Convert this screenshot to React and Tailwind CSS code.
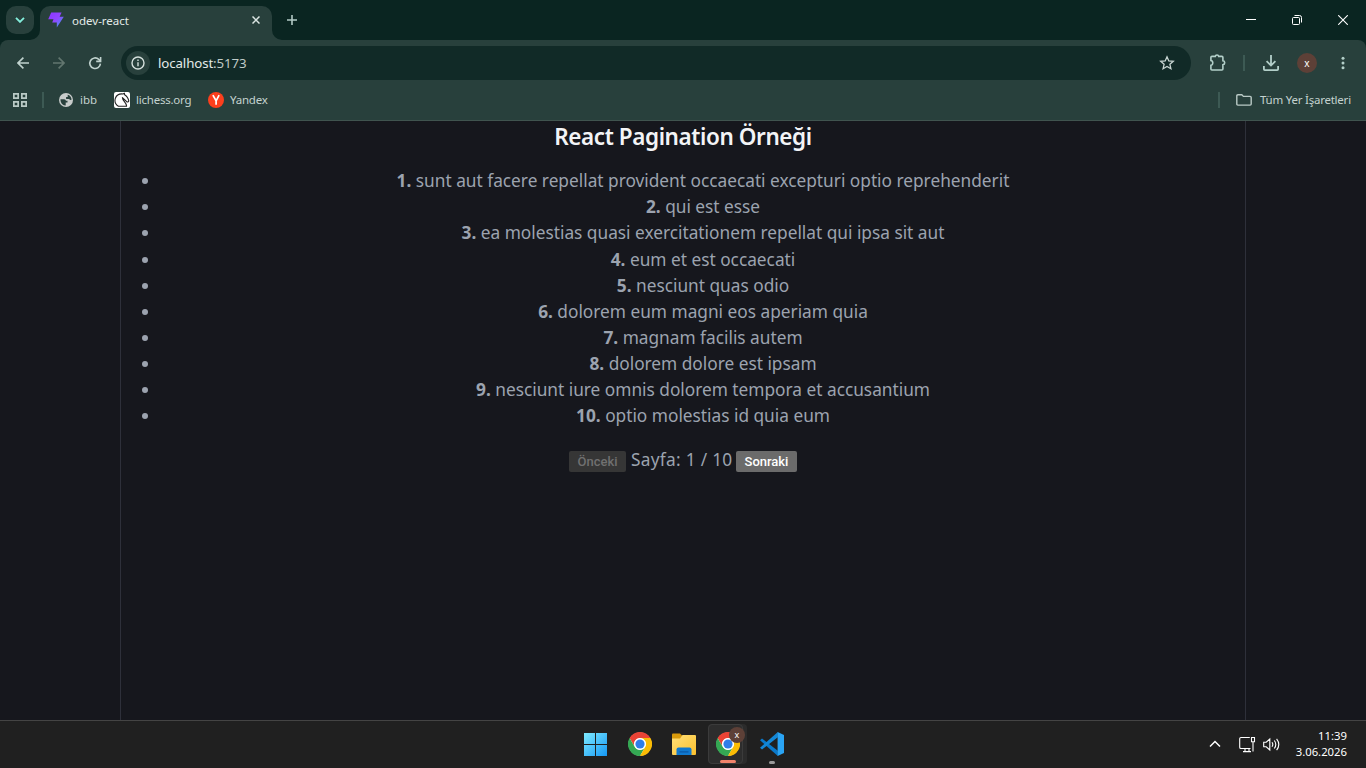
import { useState } from 'react';

const posts = [
  { id: 1, title: 'sunt aut facere repellat provident occaecati excepturi optio reprehenderit' },
  { id: 2, title: 'qui est esse' },
  { id: 3, title: 'ea molestias quasi exercitationem repellat qui ipsa sit aut' },
  { id: 4, title: 'eum et est occaecati' },
  { id: 5, title: 'nesciunt quas odio' },
  { id: 6, title: 'dolorem eum magni eos aperiam quia' },
  { id: 7, title: 'magnam facilis autem' },
  { id: 8, title: 'dolorem dolore est ipsam' },
  { id: 9, title: 'nesciunt iure omnis dolorem tempora et accusantium' },
  { id: 10, title: 'optio molestias id quia eum' }
];

const TOTAL_PAGES = 10;

function BoltLogo() {
  return (
    <svg width="16" height="16" viewBox="0 0 16 16">
      <defs>
        <linearGradient id="bolt" x1="0" y1="0" x2="1" y2="1">
          <stop offset="0" stopColor="#8b35ff" />
          <stop offset="0.5" stopColor="#9146ff" />
          <stop offset="0.75" stopColor="#5b7cf5" />
          <stop offset="1" stopColor="#8a3cff" />
        </linearGradient>
      </defs>
      <path fill="url(#bolt)" d="M3.2 0.4h10.4l-2 4.4h4.2L8.8 15.6V10.4H4.2l1.3-3.2H0.2z" />
    </svg>
  );
}

function ChromeLogo({ className }) {
  return (
    <svg className={className} viewBox="0 0 48 48">
      <circle cx="24" cy="24" r="23" fill="#fff" />
      <path fill="#ea4335" d="M3.2 12A24 24 0 0 1 44.8 12H24a12 12 0 0 0-10.4 18z" />
      <path fill="#34a853" d="M3.2 12A24 24 0 0 0 24 48l10.4-18a12 12 0 0 1-20.8 0z" />
      <path fill="#fbbc04" d="M44.8 12A24 24 0 0 1 24 48l10.4-18A12 12 0 0 0 24 12z" />
      <circle cx="24" cy="24" r="11.6" fill="#fff" />
      <circle cx="24" cy="24" r="9.2" fill="#2f7de9" />
    </svg>
  );
}

function TabStrip() {
  return (
    <div className="flex h-10 bg-[#0a2521]">
      <div className="ml-1.5 mt-1.5 flex size-7 items-center justify-center rounded-[10px] bg-[#28403c]">
        <svg width="10" height="6" viewBox="0 0 10 6" fill="none" stroke="#84efdc" strokeWidth="1.9">
          <path d="M1 0.8l4 4 4-4" />
        </svg>
      </div>
      <svg className="-ml-1 mt-auto" width="10" height="10" viewBox="0 0 10 10">
        <path fill="#28403c" d="M10 0v10H0A10 10 0 0 0 10 0z" />
      </svg>
      <div className="mt-1.5 flex h-[34px] w-[232px] items-center rounded-t-[10px] bg-[#28403c] pb-1.5 pl-2 pr-3">
        <BoltLogo />
        <span className="ml-2 flex-1 pt-px text-[11.5px] leading-4 text-[#e3ebe9]">odev-react</span>
        <svg width="8" height="8" viewBox="0 0 8 8" fill="none" stroke="#dce5e3" strokeWidth="1.5">
          <path d="M0.5 0.5l7 7M7.5 0.5l-7 7" />
        </svg>
      </div>
      <svg className="mt-auto" width="10" height="10" viewBox="0 0 10 10">
        <path fill="#28403c" d="M0 0v10h10A10 10 0 0 1 0 0z" />
      </svg>
      <svg className="ml-[5px] mt-[15px]" width="10" height="10" viewBox="0 0 10 10" fill="none" stroke="#b3cac6" strokeWidth="1.6">
        <path d="M5 0v10M0 5h10" />
      </svg>
      <div className="ml-auto mr-[18px] flex items-center gap-9 text-white">
        <svg width="10" height="10" viewBox="0 0 10 10" stroke="currentColor">
          <path d="M0 4.5h10" />
        </svg>
        <svg width="10" height="10" viewBox="0 0 10 10" fill="none" stroke="currentColor">
          <rect x="0.5" y="2.5" width="7" height="7" rx="1" />
          <path d="M2.5 0.5h5a2 2 0 0 1 2 2v5" />
        </svg>
        <svg width="10" height="10" viewBox="0 0 10 10" stroke="currentColor" strokeWidth="1.1">
          <path d="M0.2 0.2l9.6 9.6M9.8 0.2L0.2 9.8" />
        </svg>
      </div>
    </div>
  );
}

function Toolbar() {
  return (
    <div className="bg-[#0a2521]">
      <div className="flex h-10 items-center rounded-t-[8px] bg-[#28403c] pt-1.5">
        <svg className="ml-[17px]" width="12" height="12" viewBox="0 0 12 12" fill="none" stroke="#c0d2ce" strokeWidth="1.6">
          <path d="M12 6H1.2M6.4 0.6L1 6l5.4 5.4" />
        </svg>
        <svg className="ml-6" width="12" height="12" viewBox="0 0 12 12" fill="none" stroke="#62766f" strokeWidth="1.6">
          <path d="M0 6h10.8M5.6 0.6L11 6l-5.4 5.4" />
        </svg>
        <svg className="ml-[23px]" width="14" height="14" viewBox="0 0 14 14" fill="none" stroke="#c0d2ce" strokeWidth="1.6">
          <path d="M12.4 7.6A5.3 5.3 0 1 1 10.8 3.4L12.4 5" />
          <path d="M12.6 1v4.4H8.2" />
        </svg>
        <div className="ml-[19px] flex h-[34px] w-[1070px] items-center rounded-full bg-[#112a27] pl-[5px] pr-4">
          <div className="flex size-6 items-center justify-center rounded-full bg-[#28403c]">
            <svg width="14" height="14" viewBox="0 0 14 14" fill="none" stroke="#d5e0dd" strokeWidth="1.4">
              <circle cx="7" cy="7" r="6" />
              <path d="M7 6.2v4M7 3.6v1.5" />
            </svg>
          </div>
          <span className="ml-2 flex-1 text-[13.3px] leading-5 tracking-[-0.12px] text-[#e3ebe9]">
            localhost<span className="text-[#c0cbc8]">:5173</span>
          </span>
          <svg width="16" height="16" viewBox="0 0 16 16" fill="none" stroke="#c9d6d3" strokeWidth="1.3">
            <path d="M8 1.8l1.8 4.1 4.5.4-3.4 3 1 4.4L8 11.4l-3.9 2.3 1-4.4-3.4-3 4.5-.4z" />
          </svg>
        </div>
        <svg className="ml-[18px]" width="18" height="18" viewBox="0 0 18 18" fill="none" stroke="#b3cfc9" strokeWidth="1.6">
          <path d="M1.9 3.4q0-1 1-1h3.4q.2-1.4 1.7-1.4t1.7 1.4h3.2q1 0 1 1v3.4q1.8.2 1.8 2t-1.8 2v4.2q0 1-1 1H2.9q-1 0-1-1v-3.6q1.9-.4 1.9-2.5t-1.9-2.4z" />
        </svg>
        <div className="ml-4 h-4 w-0.5 bg-[#3d5a54]" />
        <svg className="ml-[17px]" width="18" height="18" viewBox="0 0 18 18" fill="none" stroke="#b3cfc9" strokeWidth="1.8">
          <path d="M9 1v10M4.6 7.2L9 11.6l4.4-4.4M1.9 12v3.2q0 .9.9.9h12.4q.9 0 .9-.9V12" />
        </svg>
        <div className="ml-[17px] flex size-5 items-center justify-center rounded-full bg-[#5d4037] pb-px text-[10px] leading-none text-white">
          x
        </div>
        <svg className="ml-6" width="4" height="14" viewBox="0 0 4 14" fill="#b3cfc9">
          <circle cx="2" cy="2.2" r="1.5" />
          <circle cx="2" cy="7" r="1.5" />
          <circle cx="2" cy="11.8" r="1.5" />
        </svg>
      </div>
    </div>
  );
}

function Bookmarks() {
  return (
    <div className="flex h-[41px] items-center border-b border-[#40544f] bg-[#28403c] pl-[13px] text-[11.5px] tracking-[-0.23px] text-[#c4d2cf]">
      <svg width="14" height="14" viewBox="0 0 14 14" fill="none" stroke="#b9c9c5" strokeWidth="1.7">
        <path d="M0.85.85h4.3v4.3h-4.3zM8.85.85h4.3v4.3h-4.3zM0.85 8.85h4.3v4.3h-4.3zM8.85 8.85h4.3v4.3h-4.3z" />
      </svg>
      <div className="ml-[15px] h-4 w-0.5 bg-[#3d5a54]" />
      <svg className="ml-[15px]" width="14" height="14" viewBox="0 0 14 14">
        <circle cx="7" cy="7" r="7" fill="#c7cbca" />
        <path fill="#28403c" d="M1.5 6.2h3.6q1.8.2 1.8 1.6h1.6v1.7H6.7v3q-3.6.1-4.8-3.4Q1.4 7.8 1.5 6.2z" />
        <path fill="#28403c" d="M8.7 1.8q3.2.9 3.8 4.2.1 1-.5 1.1-1.4.1-1.8-1H7.1V3.9h1.6z" />
      </svg>
      <span className="ml-[7px] w-[17px] tracking-normal">ibb</span>
      <svg className="ml-[17px]" width="16" height="16" viewBox="0 0 16 16">
        <rect width="16" height="16" rx="2" fill="#fff" />
        <path
          fill="none"
          stroke="#222"
          strokeWidth="1.1"
          strokeLinejoin="round"
          d="M12.6 14.2H4.4C1.4 12.4.4 9.2 1.4 6.2 2.6 3 5.6 1.6 9 2l1.4-.8.2 1.5c2.3 1.2 3.5 3.4 4.2 6.2-.5 1-1.3 1.3-2.1.8L8.4 5.6c.3 3.8 4.3 5 4.2 8.6z"
        />
      </svg>
      <span className="ml-1.5 w-[56px] whitespace-nowrap">lichess.org</span>
      <svg className="ml-4" width="16" height="16" viewBox="0 0 16 16">
        <circle cx="8" cy="8" r="8" fill="#fc3f1d" />
        <path fill="none" stroke="#fff" strokeWidth="1.7" d="M4.9 3.2l3.2 5.6v4M11.1 3.2L8.1 8.8" />
      </svg>
      <span className="ml-1.5">Yandex</span>
      <div className="ml-auto h-4 w-0.5 bg-[#3d5a54]" />
      <svg className="ml-4" width="16" height="12" viewBox="0 0 16 12" fill="none" stroke="#b9c9c5" strokeWidth="1.4">
        <path d="M.8 10V1.9Q.8.8 1.9.8h3.9l1.6 1.6h6.7q1.1 0 1.1 1.1V10q0 1.1-1.1 1.1H1.9Q.8 11.1.8 10z" />
      </svg>
      <span className="ml-2 mr-[15px] w-[91px] whitespace-nowrap">Tüm Yer İşaretleri</span>
    </div>
  );
}

function PageButton({ className, disabled, onClick, children }) {
  return (
    <button
      type="button"
      disabled={disabled}
      onClick={onClick}
      className={`mt-[3px] h-[21px] rounded-xs bg-[#6b6b6b] pb-px font-['Roboto'] text-[13px] font-medium leading-none text-white disabled:bg-[#363636] disabled:text-[#707070] ${className}`}
    >
      {children}
    </button>
  );
}

function Pagination({ page, onChange }) {
  return (
    <div className="mt-[18px] flex h-[26px] items-center justify-center gap-[5px]">
      <PageButton className="w-[57px]" disabled={page === 1} onClick={() => onChange(page - 1)}>
        Önceki
      </PageButton>
      <span className="w-[100px] whitespace-nowrap text-center tracking-[0.28px]">Sayfa: {page} / {TOTAL_PAGES}</span>
      <PageButton className="w-[61px]" disabled={page === TOTAL_PAGES} onClick={() => onChange(page + 1)}>
        Sonraki
      </PageButton>
    </div>
  );
}

function Page() {
  const [page, setPage] = useState(1);

  return (
    <main className="flex flex-1 justify-center bg-[#16171d]">
      <div className="w-[1126px] border-x border-[#2e303a] text-[17.3px] leading-[26.1px] tracking-[-0.01px] text-[#9ca3af]">
        <h2 className="mt-0.5 text-center text-[22.5px] font-semibold leading-[28px] tracking-[-0.42px] text-[#f3f4f6]">
          React Pagination Örneği
        </h2>
        <ul className="mt-[17.25px] pl-10">
          {posts.map(post => (
            <li key={post.id} className="flex items-center">
              <span className="-ml-[19px] size-1.5 rounded-full bg-[#9ca3af]" />
              <span className="ml-[13px] flex-1 text-center">
                <strong>{post.id}.</strong> {post.title}
              </span>
            </li>
          ))}
        </ul>
        <Pagination page={page} onChange={setPage} />
      </div>
    </main>
  );
}

function Taskbar() {
  return (
    <div className="flex h-12 items-center border-t border-[#444] bg-[#202020] pb-px text-white">
      <svg className="ml-[584px]" width="23" height="23" viewBox="0 0 23 23">
        <defs>
          <linearGradient id="win" x1="0" y1="0" x2="1" y2="1">
            <stop offset="0" stopColor="#7eeaff" />
            <stop offset="1" stopColor="#1598f5" />
          </linearGradient>
        </defs>
        <path fill="url(#win)" d="M0 0h11v11H0zM12 0h11v11H12zM0 12h11v11H0zM12 12h11v11H12z" />
      </svg>
      <ChromeLogo className="ml-[21px] size-6" />
      <svg className="ml-5" width="24" height="22" viewBox="0 0 24 22">
        <defs>
          <linearGradient id="folder" x1="0" y1="0" x2="1" y2="1">
            <stop offset="0" stopColor="#ffe07a" />
            <stop offset="1" stopColor="#fbc02d" />
          </linearGradient>
        </defs>
        <path fill="#d99a0b" d="M0 1.5Q0 .5 1 .5h7l2.5 2.5V8H0z" />
        <path fill="url(#folder)" d="M0 5.5h8l2.5-3.5H23q1 0 1 1v18q0 1-1 1H1q-1 0-1-1z" />
        <path fill="#1079cf" d="M4.5 22v-5.5q0-2 2-2h11q2 0 2 2V22z" />
        <path fill="#0a57a4" d="M7.5 18.3h9v1.2h-9z" />
      </svg>
      <div className="ml-3 flex h-10 w-[39px] rounded-[4px] bg-[#2b2b2b]">
        <div className="relative flex w-[35px] items-center justify-center rounded-[4px] border border-[#3b3b3b] bg-[#2d2d2d]">
          <ChromeLogo className="ml-[5px] size-6" />
          <span className="absolute left-5 top-0.5 flex size-4 items-center justify-center rounded-full bg-[#5d4037] pb-px text-[9px] leading-none text-white">
            x
          </span>
          <span className="absolute bottom-0 left-[11px] h-[3px] w-4 rounded-full bg-[#f2836b]" />
        </div>
      </div>
      <div className="relative ml-[13px] h-10 w-6">
        <svg className="mt-2" width="24" height="24" viewBox="0 0 24 24">
          <path fill="#0a79cb" d="M0 8.2l2-1.8 15.8 12.4v5.2z" />
          <path fill="#1387d6" d="M0 15.8l2 1.8L17.8 5.2V0z" />
          <path fill="#2aa4f4" d="M17.6 0L24 3v18l-6.4 3z" />
        </svg>
        <span className="absolute bottom-0 left-[9px] h-[3px] w-1.5 rounded-full bg-[#9a9a9a]" />
      </div>
      <svg className="ml-auto" width="12" height="8" viewBox="0 0 12 8" fill="none" stroke="currentColor" strokeWidth="1.5">
        <path d="M1 6.5l5-5 5 5" />
      </svg>
      <svg className="ml-[18px]" width="17" height="17" viewBox="0 0 17 17" fill="none" stroke="currentColor" strokeWidth="1.1">
        <path d="M10.8 1.5H2Q.7 1.5.7 2.8v8.4q0 1.3 1.3 1.3h9.5M4 15.6h8M6 12.5v3M10 12.5v3M12.5 1.5h3v4.2h-3zM14 5.7v9.8" />
      </svg>
      <svg className="ml-[7px]" width="17" height="15" viewBox="0 0 17 15" fill="none" stroke="currentColor" strokeWidth="1.1">
        <path d="M.7 5.2h2.5L6.8 2v11L3.2 9.8H.7zM9 5.3q1.6 2.2 0 4.4M11.3 3.5q3 4 0 8M13.6 1.8q4.4 5.7 0 11.4" />
      </svg>
      <div className="ml-[11px] mr-[19px] w-[56px] text-right text-[11.3px] leading-4">
        <div>11:39</div>
        <div className="whitespace-nowrap">3.06.2026</div>
      </div>
    </div>
  );
}

export default function App() {
  return (
    <div className="flex h-screen w-screen flex-col overflow-hidden font-['Noto_Sans',sans-serif]">
      <TabStrip />
      <Toolbar />
      <Bookmarks />
      <Page />
      <Taskbar />
    </div>
  );
}
